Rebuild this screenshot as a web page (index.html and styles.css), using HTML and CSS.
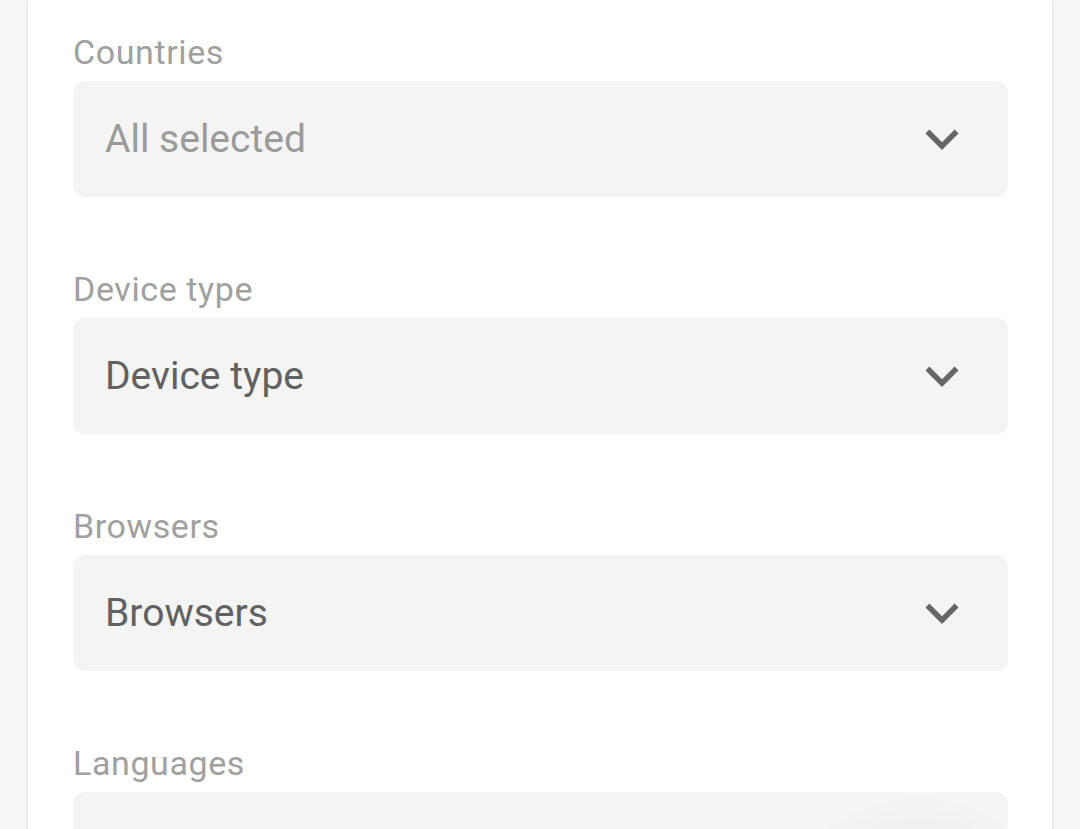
FILE: index.html
```html
<!DOCTYPE html>
<html lang="en">
<head>
<meta charset="utf-8">
<title>Filters</title>
<link rel="stylesheet" href="styles.css">
</head>
<body>
<div class="page">
  <div class="card">
    <div class="group">
      <div class="label">Countries</div>
      <div class="field">
        <span class="value placeholder">All selected</span>
        <svg class="chevron" viewBox="0 0 24 24"><path d="M16.59 8.59L12 13.17 7.41 8.59 6 10l6 6 6-6z"/></svg>
      </div>
    </div>
    <div class="group">
      <div class="label">Device type</div>
      <div class="field">
        <span class="value">Device type</span>
        <svg class="chevron" viewBox="0 0 24 24"><path d="M16.59 8.59L12 13.17 7.41 8.59 6 10l6 6 6-6z"/></svg>
      </div>
    </div>
    <div class="group">
      <div class="label">Browsers</div>
      <div class="field">
        <span class="value">Browsers</span>
        <svg class="chevron" viewBox="0 0 24 24"><path d="M16.59 8.59L12 13.17 7.41 8.59 6 10l6 6 6-6z"/></svg>
      </div>
    </div>
    <div class="group">
      <div class="label">Languages</div>
      <div class="field"></div>
    </div>
    <div class="fab-shadow"></div>
  </div>
</div>
</body>
</html>
```

FILE: styles.css
```css
html, body {
  margin: 0;
  padding: 0;
  height: 100%;
  overflow: hidden;
}

body {
  background: #f7f7f7;
  font-family: Roboto, "Noto Sans", Arial, sans-serif;
}

.page {
  padding: 0 28px 0 28px;
}

.card {
  position: relative;
  background: #ffffff;
  box-shadow: 0 0 3px rgba(0, 0, 0, 0.18);
  padding: 32px 44px 200px 45px;
  display: flex;
  flex-direction: column;
  gap: 72px;
  min-height: 900px;
}

.group {
  display: flex;
  flex-direction: column;
  gap: 9px;
}

.label {
  font-size: 34px;
  line-height: 40px;
  letter-spacing: 0.6px;
  color: #a0a0a0;
}

.field {
  height: 116px;
  background: #f4f4f4;
  border-radius: 12px;
  display: flex;
  align-items: center;
  justify-content: space-between;
  padding: 0 33px 0 32px;
}

.value {
  font-size: 39px;
  color: #616161;
}

.value.placeholder {
  color: #9b9b9b;
}

.chevron {
  width: 66px;
  height: 66px;
  fill: #666666;
  flex: none;
}

.fab-shadow {
  position: absolute;
  left: 790px;
  top: 860px;
  width: 200px;
  height: 200px;
  border-radius: 50%;
  box-shadow: 0 -20px 60px rgba(0, 0, 0, 0.07);
  pointer-events: none;
}
```
